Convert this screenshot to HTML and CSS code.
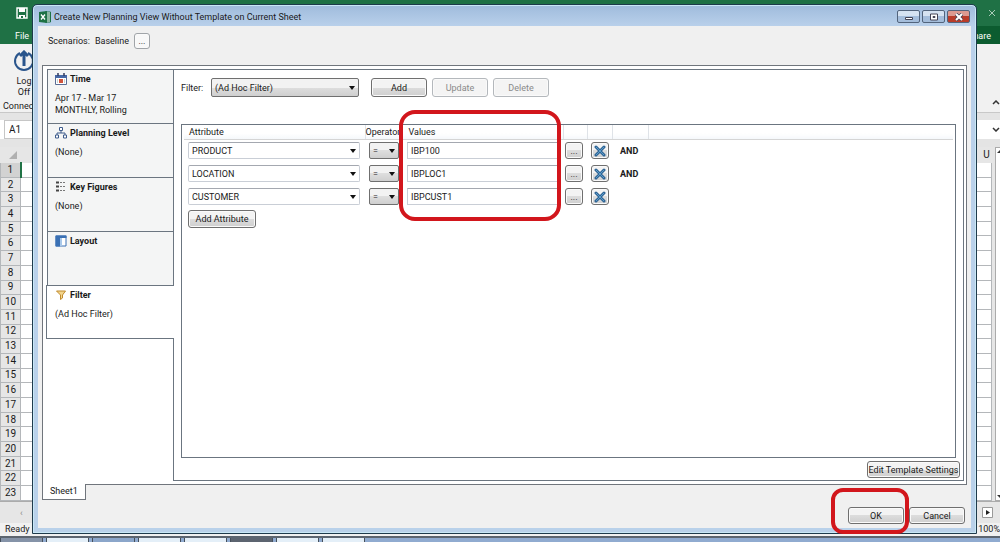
FILE: index.html
```html
<!DOCTYPE html>
<html lang="en">
<head>
    <meta charset="UTF-8">
    <meta name="viewport" content="width=device-width, initial-scale=1.0">
    <title>Create New Planning View</title>
    <link rel="stylesheet" href="styles.css">
</head>
<body>

    <!-- Excel window behind the dialog -->
    <div class="excel">
        <header class="excel-title">
            <svg class="save-icon" viewBox="0 0 12 12"><path d="M1 1h10v10H1z" fill="none" stroke="#fff" stroke-width="1.4"/><path d="M3 1h6v4H3zM3 8h6v3H3z" fill="#fff"/><path d="M5 9h2v2H5z" fill="#1f7145"/></svg>
            <svg class="close-icon" viewBox="0 0 8 8"><path d="M1 1l6 6M7 1L1 7" stroke="#a9cbb8" fill="none"/></svg>
        </header>
        <nav class="excel-tabs">
            <a href="#">File</a>
            <a href="#" class="share">Share</a>
        </nav>
        <div class="ribbon">
            <button type="button" class="logoff">
                <svg viewBox="0 0 22 22"><path d="M7 3a9 9 0 1 0 8 0" fill="none" stroke="#2a558c" stroke-width="2"/><path d="M11 16V4M7 6l4-4 4 4" fill="none" stroke="#2a558c" stroke-width="3"/></svg>
                <span>Log<br>Off</span>
            </button>
            <span class="group-name">Connection</span>
            <svg class="chevron" viewBox="0 0 8 5"><path d="M1 4l3-3 3 3" fill="none" stroke="#333" stroke-width="1.5"/></svg>
        </div>
        <div class="formula-bar">
            <input type="text" class="name-box" value="A1" aria-label="Name box">
            <svg class="chevron" viewBox="0 0 8 5"><path d="M1 1l3 3 3-3" fill="none" stroke="#333" stroke-width="1.5"/></svg>
        </div>
        <div class="sheet">
            <table class="cells">
                <thead>
                    <tr><th class="corner"><svg viewBox="0 0 8 8"><path d="M8 0v8H0z" fill="#b0b0b0"/></svg></th><th class="col"></th><th class="col-u">U</th></tr>
                </thead>
                <tbody>
                    <tr class="active"><th>1</th><td></td><td></td></tr>
                    <tr><th>2</th><td></td><td></td></tr>
                    <tr><th>3</th><td></td><td></td></tr>
                    <tr><th>4</th><td></td><td></td></tr>
                    <tr><th>5</th><td></td><td></td></tr>
                    <tr><th>6</th><td></td><td></td></tr>
                    <tr><th>7</th><td></td><td></td></tr>
                    <tr><th>8</th><td></td><td></td></tr>
                    <tr><th>9</th><td></td><td></td></tr>
                    <tr><th>10</th><td></td><td></td></tr>
                    <tr><th>11</th><td></td><td></td></tr>
                    <tr><th>12</th><td></td><td></td></tr>
                    <tr><th>13</th><td></td><td></td></tr>
                    <tr><th>14</th><td></td><td></td></tr>
                    <tr><th>15</th><td></td><td></td></tr>
                    <tr><th>16</th><td></td><td></td></tr>
                    <tr><th>17</th><td></td><td></td></tr>
                    <tr><th>18</th><td></td><td></td></tr>
                    <tr><th>19</th><td></td><td></td></tr>
                    <tr><th>20</th><td></td><td></td></tr>
                    <tr><th>21</th><td></td><td></td></tr>
                    <tr><th>22</th><td></td><td></td></tr>
                    <tr><th>23</th><td></td><td></td></tr>
                </tbody>
            </table>
            <div class="scrollbar">
                <svg viewBox="0 0 4 8"><path d="M1 5l3-3v3z" fill="#333"/></svg>
                <svg viewBox="0 0 4 8"><path d="M1 3l3 3V3z" fill="#333"/></svg>
            </div>
        </div>
        <div class="sheet-scroll">
            <span class="prev">‹</span>
            <svg class="next" viewBox="0 0 11 11"><path d="M0.5 0.5h10v10h-10z" fill="#fff" stroke="#999"/><path d="M4 3l4 2.500-4 2.500z" fill="#222"/></svg>
        </div>
        <footer class="status">
            <span>Ready</span>
            <span>100%</span>
        </footer>
        <div class="taskbar">
            <span class="start"></span>
            <span></span>
            <span class="blue"></span>
            <span></span>
            <span></span>
            <span class="dark"></span>
            <span></span>
            <span></span>
        </div>
    </div>

    <!-- Planning view dialog -->
    <div class="dialog">
        <div class="titlebar">
            <svg class="xl-icon" viewBox="0 0 12 12"><path d="M6 1h5.500v10H6z" fill="#fff" stroke="#1e7145"/><path d="M8 3h3M8 5h3M8 7h3M8 9h3" stroke="#1e7145"/><path d="M0 1l8-1v12l-8-1z" fill="#1e7145"/><path d="M2 3.500l4 5M6 3.500l-4 5" stroke="#fff" stroke-width="1.300"/></svg>
            <h1>Create New Planning View Without Template on Current Sheet</h1>
            <div class="window-buttons">
                <button type="button" aria-label="Minimize"><svg viewBox="0 0 10 8"><path d="M1.500 4.500h7v2h-7z" fill="#fff" stroke="#445"/></svg></button>
                <button type="button" aria-label="Maximize"><svg viewBox="0 0 10 8"><path d="M1.500 1h7v6h-7z" fill="#fff" stroke="#445"/><path d="M4 3.500h2v1H4z" fill="#fff" stroke="#445"/></svg></button>
                <button type="button" class="red" aria-label="Close"><svg viewBox="0 0 10 8"><path d="M2 1l6 6M8 1L2 7" stroke="#445" stroke-width="3.500"/><path d="M2 1l6 6M8 1L2 7" stroke="#fff" stroke-width="2"/></svg></button>
            </div>
        </div>

        <div class="client">
            <div class="scenarios">
                <span>Scenarios:</span>
                <span>Baseline</span>
                <button type="button" class="btn light" aria-label="Choose scenario">...</button>
            </div>

            <div class="main">
                <nav class="steps">
                    <a href="#" class="step">
                        <svg viewBox="0 0 12 12"><path d="M0.500 2.500h11v9H0.500z" fill="#fff" stroke="#5a6c94"/><path d="M0 2h12v3H0z" fill="#4668a6"/><path d="M3 0v3M9 0v3" stroke="#333c60" stroke-width="1.500"/><path d="M4 6h4v4H4z" fill="#d0543c"/><path d="M2 7h1M2 9h1M9 7h1M9 9h1" stroke="#8aa"/></svg>
                        <b>Time</b>
                        <span>Apr 17 - Mar 17<br>MONTHLY, Rolling</span>
                    </a>
                    <a href="#" class="step">
                        <svg viewBox="0 0 12 12"><path d="M4.500 0.500h3v3h-3zM0.500 8h3v3h-3zM8.500 8h3v3h-3z" fill="#fff" stroke="#3e5c8c"/><path d="M6 4v2M2 8V6h8v2" fill="none" stroke="#3e5c8c"/></svg>
                        <b>Planning Level</b>
                        <span>(None)</span>
                    </a>
                    <a href="#" class="step">
                        <svg viewBox="0 0 12 12"><path d="M1 1.500h3M1 5.500h3M1 9.500h3" stroke="#444" stroke-width="2"/><path d="M5 1.500h2M8 1.500h2M5 5.500h2M8 5.500h2M5 9.500h2M8 9.500h2" stroke="#777"/></svg>
                        <b>Key Figures</b>
                        <span>(None)</span>
                    </a>
                    <a href="#" class="step">
                        <svg viewBox="0 0 12 12"><path d="M1 1h10v10H1z" fill="#fff" stroke="#3a70b4"/><path d="M0.500 0.500h11V3H0.500zM0.500 0.500H5v11H0.500z" fill="#3a70b4"/><path d="M5 3h2v8H5z" fill="#a8c8ea"/></svg>
                        <b>Layout</b>
                    </a>
                    <a href="#" class="step current">
                        <svg viewBox="0 0 12 12"><path d="M1.500 2h9L7.500 6v3L5.500 10.500V6z" fill="#f3d58c" stroke="#c08a2c"/></svg>
                        <b>Filter</b>
                        <span>(Ad Hoc Filter)</span>
                    </a>
                    <div class="steps-rest"></div>
                </nav>

                <form class="panel">
                    <div class="filter-row">
                        <label for="filter">Filter:</label>
                        <select id="filter" class="drop filter-select">
                            <option>(Ad Hoc Filter)</option>
                        </select>
                        <button type="button" class="btn">Add</button>
                        <button type="button" class="btn" disabled>Update</button>
                        <button type="button" class="btn" disabled>Delete</button>
                    </div>

                    <div class="attributes">
                        <table class="attr-table">
                            <thead>
                                <tr>
                                    <th class="c-attr">Attribute</th>
                                    <th class="c-op">Operator</th>
                                    <th class="c-val">Values</th>
                                    <th class="c-more"></th>
                                    <th class="c-del"></th>
                                    <th class="c-and"></th>
                                    <th></th>
                                </tr>
                            </thead>
                            <tbody>
                                <tr>
                                    <td><select class="drop plain" aria-label="Attribute 1"><option>PRODUCT</option></select></td>
                                    <td><select class="drop op" aria-label="Operator 1"><option>=</option></select></td>
                                    <td><input type="text" class="value" value="IBP100" aria-label="Value 1"></td>
                                    <td><button type="button" class="btn square">...</button></td>
                                    <td><button type="button" class="btn square" aria-label="Remove"><svg viewBox="0 0 12 12"><path d="M2 2l8 8M10 2l-8 8" stroke="#2f6596" stroke-width="3" stroke-linecap="round"/><path d="M2 2l8 8M10 2l-8 8" stroke="#5c9cc8" stroke-width="1"/></svg></button></td>
                                    <td><b>AND</b></td>
                                    <td></td>
                                </tr>
                                <tr>
                                    <td><select class="drop plain" aria-label="Attribute 2"><option>LOCATION</option></select></td>
                                    <td><select class="drop op" aria-label="Operator 2"><option>=</option></select></td>
                                    <td><input type="text" class="value" value="IBPLOC1" aria-label="Value 2"></td>
                                    <td><button type="button" class="btn square">...</button></td>
                                    <td><button type="button" class="btn square" aria-label="Remove"><svg viewBox="0 0 12 12"><path d="M2 2l8 8M10 2l-8 8" stroke="#2f6596" stroke-width="3" stroke-linecap="round"/><path d="M2 2l8 8M10 2l-8 8" stroke="#5c9cc8" stroke-width="1"/></svg></button></td>
                                    <td><b>AND</b></td>
                                    <td></td>
                                </tr>
                                <tr>
                                    <td><select class="drop plain" aria-label="Attribute 3"><option>CUSTOMER</option></select></td>
                                    <td><select class="drop op" aria-label="Operator 3"><option>=</option></select></td>
                                    <td><input type="text" class="value" value="IBPCUST1" aria-label="Value 3"></td>
                                    <td><button type="button" class="btn square">...</button></td>
                                    <td><button type="button" class="btn square" aria-label="Remove"><svg viewBox="0 0 12 12"><path d="M2 2l8 8M10 2l-8 8" stroke="#2f6596" stroke-width="3" stroke-linecap="round"/><path d="M2 2l8 8M10 2l-8 8" stroke="#5c9cc8" stroke-width="1"/></svg></button></td>
                                    <td></td>
                                    <td></td>
                                </tr>
                            </tbody>
                        </table>
                        <button type="button" class="btn add-attribute">Add Attribute</button>
                        <div class="ring ring-values"></div>
                    </div>

                    <div class="panel-foot">
                        <button type="button" class="btn template">Edit Template Settings</button>
                    </div>
                </form>
            </div>

            <div class="bottom">
                <a href="#" class="sheet-tab">Sheet1</a>
                <div class="actions">
                    <button type="button" class="btn">OK</button>
                    <button type="button" class="btn">Cancel</button>
                    <div class="ring ring-ok"></div>
                </div>
            </div>
        </div>
    </div>

</body>
</html>
```
FILE: styles.css
```css
* {
    box-sizing: border-box;
}

body {
    margin: 0;
    font-family: Roboto, "Noto Sans", sans-serif;
    font-size: 9px;
    line-height: 12px;
    color: #1a1a1a;
    overflow: hidden;
}

button,
input,
select {
    font: inherit;
    color: inherit;
    margin: 0;
}

a {
    color: inherit;
    text-decoration: none;
}

svg {
    display: block;
}

/* Excel window */

.excel {
    height: 100vh;
    display: flex;
    flex-direction: column;
    background: #f1f1f1;
}

.excel-title {
    height: 26px;
    padding: 0 4px 0 16px;
    display: flex;
    align-items: center;
    justify-content: space-between;
    background: #1f7145;
}

.save-icon {
    width: 12px;
    height: 12px;
}

.close-icon {
    width: 8px;
    height: 8px;
}

.excel-tabs {
    height: 18px;
    padding: 4px 9px 0 15px;
    display: flex;
    justify-content: space-between;
    background: linear-gradient(90deg, #1f7145 50%, #0c5c30 50%);
    color: #fff;
}

.ribbon {
    height: 69px;
    padding: 4px 0 0 3px;
    display: grid;
    grid-template-columns: 60px 1fr;
    grid-template-rows: 52px 1fr;
    justify-items: start;
    border-bottom: 1px solid #c8c8c8;
}

.logoff {
    grid-column: 1 / 3;
    padding: 0 0 0 10px;
    border: none;
    background: none;
    text-align: center;
    line-height: 11px;
}

.logoff svg {
    width: 22px;
    height: 22px;
    margin-bottom: 4px;
}

.ribbon .chevron {
    justify-self: end;
}

.chevron {
    width: 8px;
    height: 5px;
}

.formula-bar {
    height: 34px;
    padding: 7px 0 8px 4px;
    display: flex;
    align-items: center;
    justify-content: space-between;
    background: linear-gradient(#e4e4e4 7px, #fff 7px, #fff 26px, #e4e4e4 26px);
}

.name-box {
    width: 60px;
    height: 19px;
    padding: 0 4px;
    border: 1px solid #c6c6c6;
    background: #fff;
    font-size: 10px;
}

.sheet {
    flex: 1;
    display: flex;
    background: #e6e6e6;
}

.cells {
    flex: 1;
    border-collapse: collapse;
    table-layout: fixed;
    margin-right: 3px;
}

.cells th,
.cells td {
    padding: 0;
    border: 1px solid #b4b7ba;
    line-height: 10px;
    font-weight: normal;
}

.cells th {
    background: #e6e6e6;
    font-size: 10px;
}

.cells td {
    background: #fff;
}

.cells thead th {
    height: 15px;
    border-color: #e6e6e6;
}

.cells .corner {
    width: 20px;
}

.cells .corner svg {
    width: 8px;
    height: 8px;
    margin-left: 8px;
}

.cells .col-u {
    width: 24px;
    text-align: center;
    padding-left: 14px;
}

.cells .active th {
    background: #d2d2d2;
    border-right: 2px solid #217346;
}

.cells .active td {
    border-top: 1px solid #217346;
}

.scrollbar {
    width: 5px;
    display: flex;
    flex-direction: column;
    justify-content: space-between;
    border: 1px solid #ababab;
    border-right: none;
    background: #fff;
}

.scrollbar svg {
    width: 4px;
    height: 8px;
}

.sheet-scroll {
    height: 22px;
    padding: 0 7px 0 20px;
    display: flex;
    align-items: center;
    justify-content: space-between;
    background: #e6e6e6;
    border-top: 1px solid #ababab;
    color: #888;
}

.sheet-scroll .next {
    width: 11px;
    height: 11px;
}

.status {
    height: 13px;
    padding-left: 5px;
    display: flex;
    justify-content: space-between;
}

.taskbar {
    height: 6px;
    display: flex;
    gap: 3px;
    background: #90abd0;
    border-top: 2px solid #5c6570;
}

.taskbar span {
    width: 43px;
    background: #e4eff8;
    border: 1px solid #46505c;
    border-width: 0 1px;
}

.taskbar .start {
    background: #8593a8;
}

.taskbar .blue {
    background: #8ba6ca;
}

.taskbar .dark {
    background: #5c6470;
}

/* Dialog window */

.dialog {
    position: absolute;
    top: 4px;
    right: 23px;
    bottom: 8px;
    left: 32px;
    display: flex;
    flex-direction: column;
    padding: 0 5px 5px;
    border: 1px solid #1e3a4c;
    border-radius: 5px 5px 0 0;
    background: linear-gradient(#9fbbdc, #bad1eb 22px, #b9d1ea);
    box-shadow: inset 0 0 0 1px #c9e8f6;
}

.titlebar {
    height: 21px;
    display: flex;
    align-items: center;
    gap: 3px;
    padding: 2px 1px 0;
}

.titlebar h1 {
    flex: 1;
    margin: 0;
    font-size: 9px;
    font-weight: normal;
}

.xl-icon {
    width: 12px;
    height: 12px;
}

.window-buttons {
    display: flex;
    gap: 2px;
}

.window-buttons button {
    width: 23px;
    height: 13px;
    padding: 0;
    display: grid;
    place-items: center;
    border: 1px solid #52647c;
    border-radius: 2px;
    background: linear-gradient(#d5e2f1 50%, #a4bddb 50%);
}

.window-buttons .red {
    background: linear-gradient(#dc9a90 50%, #b93c2a 50%);
}

.window-buttons svg {
    width: 10px;
    height: 8px;
}

.client {
    flex: 1;
    min-height: 0;
    display: flex;
    flex-direction: column;
    padding: 0 4px;
    background: #f0f0f0;
}

.scenarios {
    height: 39px;
    padding: 7px 6px;
    display: flex;
    align-items: flex-start;
    gap: 5px;
    line-height: 16px;
}

.btn {
    width: 56px;
    height: 18px;
    padding: 0;
    border: 1px solid #6f6f6f;
    border-radius: 3px;
    background: linear-gradient(#f3f3f3 50%, #dcdcdc 50%, #cfcfcf);
    box-shadow: inset 0 0 0 1px #fafafa;
    line-height: 14px;
    white-space: nowrap;
}

.btn:disabled {
    border-color: #b4b8bc;
    background: #f4f4f4;
    color: #8a8a8a;
}

.btn.light {
    width: 16px;
    height: 16px;
    border-color: #a0a4a8;
    background: #f8f8f8;
}

.main {
    flex: 1;
    min-height: 0;
    display: flex;
    padding: 3px 2px 3px 3px;
    border: 1px solid #70757c;
    background: #fff;
}

.steps {
    width: 128px;
    display: flex;
    flex-direction: column;
}

.step {
    height: 54px;
    margin-left: 1px;
    padding: 3px 7px;
    display: grid;
    grid-template-columns: 12px 1fr;
    grid-template-rows: 13px 1fr;
    column-gap: 3px;
    border: 1px solid #6b7580;
    border-bottom: none;
    background: #f4f5f5;
}

.step svg {
    width: 12px;
    height: 12px;
}

.step span {
    grid-column: 1 / 3;
    padding-top: 6px;
}

.step.current {
    margin-left: 0;
    padding-left: 8px;
    border-right: none;
    border-bottom: 1px solid #6b7580;
    background: #fff;
}

.steps-rest {
    flex: 1;
    border-right: 1px solid #6b7580;
}

.panel {
    flex: 1;
    min-width: 0;
    display: flex;
    flex-direction: column;
    padding: 8px 7px 2px 7px;
    border: 1px solid #6b7580;
    border-left: none;
}

.filter-row {
    display: flex;
    align-items: center;
    gap: 5px;
    margin-bottom: 27px;
}

.filter-row label {
    width: 25px;
}

.filter-row .btn {
    height: 19px;
}

.drop {
    appearance: none;
    height: 18px;
    padding: 0 3px;
    border: 1px solid #6f6f6f;
    border-radius: 2px;
    background: url("data:image/svg+xml,%3Csvg xmlns='http://www.w3.org/2000/svg' width='6' height='4'%3E%3Cpath d='M0 0h6L3 4z' fill='%23111'/%3E%3C/svg%3E") no-repeat right 3px center, linear-gradient(#f2f2f2 50%, #dedede 50%, #cfcfcf);
}

.filter-select {
    width: 148px;
    height: 19px;
    margin-right: 7px;
}

.attributes {
    position: relative;
    flex: 1;
    min-height: 0;
    padding: 0 2px;
    border: 1px solid #6b7580;
}

.attr-table {
    width: 100%;
    table-layout: fixed;
    border-collapse: collapse;
}

.attr-table th {
    height: 14px;
    padding: 0;
    border-right: 1px solid #dfe3e8;
    border-bottom: 1px solid #d5d5d5;
    background: linear-gradient(#fff 60%, #f5f8fb);
    font-weight: normal;
    text-align: left;
    white-space: nowrap;
}

.attr-table th:last-child {
    border-right: none;
}

.attr-table td {
    height: 23px;
    padding: 0;
    line-height: 16px;
}

.attr-table .c-attr {
    width: 181px;
    padding-left: 5px;
}

.c-op {
    width: 36px;
}

.attr-table .c-val {
    width: 162px;
    padding-left: 7px;
}

.c-more {
    width: 24px;
}

.c-del {
    width: 25px;
}

.c-and {
    width: 36px;
}

.attr-table td:nth-child(1) {
    padding-left: 4px;
}

.attr-table td:nth-child(2),
.attr-table td:nth-child(5) {
    padding-left: 4px;
}

.attr-table td:nth-child(3) {
    padding-left: 6px;
}

.attr-table td:nth-child(4) {
    padding-left: 2px;
}

.attr-table td:nth-child(6) {
    padding-left: 8px;
}

.drop.plain {
    display: block;
    width: 172px;
    height: 17px;
    border-color: #c9ced6;
    border-top-color: #a4a8b0;
    background-color: #fff;
    background-image: url("data:image/svg+xml,%3Csvg xmlns='http://www.w3.org/2000/svg' width='6' height='4'%3E%3Cpath d='M0 0h6L3 4z' fill='%23111'/%3E%3C/svg%3E");
}

.drop.op {
    display: block;
    width: 30px;
    height: 17px;
}

.value {
    display: block;
    width: 154px;
    height: 17px;
    padding: 0 3px;
    border: 1px solid #c9ced6;
    border-top-color: #a4a8b0;
}

.btn.square {
    width: 18px;
    height: 17px;
    display: grid;
    place-items: center;
}

.btn.square svg {
    width: 12px;
    height: 12px;
}

.add-attribute {
    display: block;
    width: 68px;
    margin: 2px 0 0 4px;
}

.panel-foot {
    display: flex;
    justify-content: flex-end;
    margin-right: -4px;
    padding-top: 3px;
}

.btn.template {
    width: 93px;
    height: 17px;
}

.bottom {
    height: 43px;
    padding-right: 2px;
    display: flex;
    align-items: flex-start;
    justify-content: space-between;
}

.sheet-tab {
    height: 16px;
    padding: 1px 7px;
    border: 1px solid #70757c;
    border-top: none;
    background: #fff;
    margin-top: -1px;
}

.actions {
    position: relative;
    display: flex;
    gap: 5px;
    padding-top: 22px;
}

.actions .btn {
    height: 17px;
}

/* Red marker outlines */

.ring {
    position: absolute;
    border: 4px solid #d2161c;
    border-radius: 16px;
    pointer-events: none;
}

.ring-values {
    top: -15px;
    left: 217px;
    width: 162px;
    height: 111px;
}

.ring-ok {
    top: 3px;
    right: 56px;
    width: 78px;
    height: 46px;
    border-radius: 12px;
}
```
